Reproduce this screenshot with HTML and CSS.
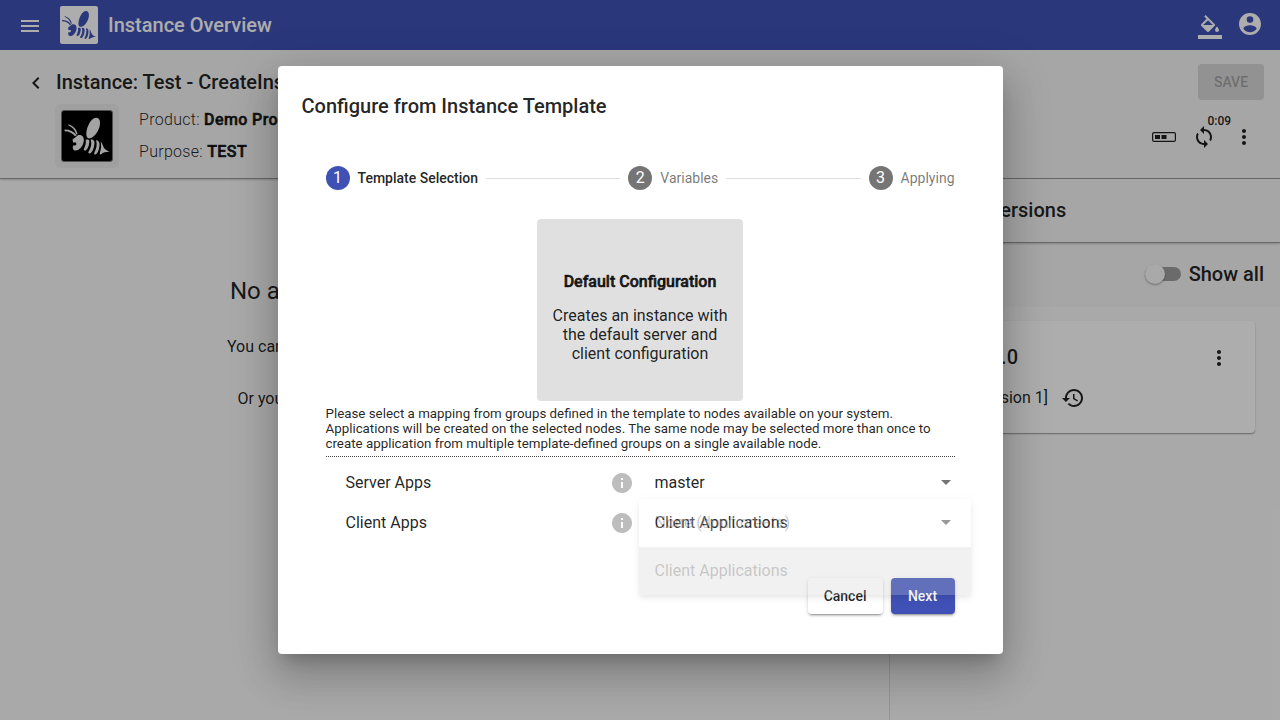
FILE: index.html
```
<!DOCTYPE html>
<html lang="en">
<head>
<meta charset="utf-8">
<title>Instance Overview</title>
<link rel="stylesheet" href="styles.css">
</head>
<body>
<svg class="defs" width="0" height="0">
  <symbol id="bee" viewBox="0 0 154 154">
    <path d="M81 84C71 80 74 55 85 36C95 18 115 14 117 33C119 53 103 80 87 84Q84 85 81 84Z"/>
    <path d="M50 74C62 72 69 81 67 93C65 108 54 121 42 122C34 122 32 114 34 106L41 106Q47 103 43 97L34 97C33 93 33 89 33 86C38 86 41 80 50 74Z"/>
    <path d="M8 57C24 57 37 63 45 75L40 78C33 68 23 62 8 62ZM19 41C35 46 45 57 48 71L44 72C39 58 32 50 20 45Z"/>
    <path d="M73 89C82 86 86 90 84 98C83 108 79 117 74 121Q67 124 67 118C71 108 75 100 73 89Z"/>
    <path d="M88 88C99 87 102 94 99 107C97 119 92 128 86 131Q79 131 82 125C89 114 93 102 88 88Z"/>
    <path d="M105 90C113 90 117 98 115 109C114 121 109 131 103 134Q97 134 100 127C106 115 109 104 105 90Z"/>
    <path d="M119 94C125 99 125 107 129 113C133 119 138 121 146 125C135 127 127 127 120 134Q114 135 117 128C120 117 122 107 119 94Z"/>
  </symbol>
  <symbol id="dots" viewBox="0 0 24 24"><path d="M12 8c1.1 0 2-.9 2-2s-.9-2-2-2-2 .9-2 2 .9 2 2 2zm0 2c-1.1 0-2 .9-2 2s.9 2 2 2 2-.9 2-2-.9-2-2-2zm0 6c-1.1 0-2 .9-2 2s.9 2 2 2 2-.9 2-2-.9-2-2-2z"/></symbol>
  <symbol id="info" viewBox="0 0 24 24"><path d="M12 2C6.48 2 2 6.48 2 12s4.48 10 10 10 10-4.480 10-10S17.520 2 12 2zm1 15h-2v-6h2v6zm0-8h-2V7h2v2z"/></symbol>
</svg>
<div class="app">
  <header class="topbar">
    <svg class="icon icon-menu" viewBox="0 0 24 24"><path d="M3 18h18v-2H3v2zm0-5h18v-2H3v2zm0-7v2h18V6H3z"/></svg>
    <div class="logo"><svg><use href="#bee"/></svg></div>
    <h1 class="topbar-title">Instance Overview</h1>
    <svg class="icon icon-fill" viewBox="0 0 24 24"><path d="M16.560 8.940L7.620 0 6.210 1.410l2.380 2.380-5.150 5.150c-.59.59-.59 1.540 0 2.120l5.500 5.500c.29.29.68.44 1.060.44s.77-.15 1.060-.44l5.500-5.500c.59-.58.59-1.530 0-2.120zM5.210 10L10 5.210 14.790 10H5.210zM19 11.500s-2 2.170-2 3.500c0 1.100.9 2 2 2s2-.9 2-2c0-1.330-2-3.500-2-3.500zM0 20h24v4H0v-4z"/></svg>
    <svg class="icon icon-user" viewBox="0 0 24 24"><path fill-rule="evenodd" d="M12 1C5.900 1 1 5.900 1 12s4.900 11 11 11 11-4.900 11-11S18.100 1 12 1zm0 3.300a3.300 3.300 0 1 1 0 6.600 3.300 3.300 0 0 1 0-6.600zm0 15.900c-2.800 0-5.200-1.400-6.600-3.500 0-2.200 4.400-3.400 6.600-3.400s6.600 1.200 6.600 3.400c-1.400 2.100-3.800 3.500-6.600 3.500z"/></svg>
  </header>
  <section class="instance">
    <div class="instance-row">
      <svg class="icon back" viewBox="0 0 24 24"><path d="M15.410 7.410L14 6l-6 6 6 6 1.410-1.410L10.830 12z"/></svg>
      <h2 class="instance-title">Instance: Test - CreateInstance</h2>
      <div class="save">SAVE</div>
    </div>
    <div class="instance-info">
      <div class="product-frame"><div class="product-logo"><svg><use href="#bee"/></svg></div></div>
      <div class="facts">
        <div>Product: <b>Demo Product</b></div>
        <div>Purpose: <b>TEST</b></div>
      </div>
      <div class="tools">
        <svg class="icon" viewBox="0 0 24 24"><rect x=".6" y="7.600" width="22.800" height="8.800" rx="1.500" fill="none" stroke="currentColor" stroke-width="1.200"/><path d="M3 10h5v4H3zM9.500 10h5v4h-5z"/></svg>
        <div class="sync"><span class="sync-time">0:09</span><svg class="icon" viewBox="0 0 24 24"><path d="M12 4V1L8 5l4 4V6c3.310 0 6 2.690 6 6 0 1.010-.25 1.970-.7 2.800l1.460 1.460C19.540 15.030 20 13.570 20 12c0-4.420-3.580-8-8-8zm0 14c-3.310 0-6-2.690-6-6 0-1.010.25-1.970.7-2.800L5.240 7.740C4.460 8.970 4 10.430 4 12c0 4.420 3.580 8 8 8v3l4-4-4-4v3z"/></svg></div>
        <svg class="icon"><use href="#dots"/></svg>
      </div>
    </div>
  </section>
  <main class="body">
    <div class="empty">
      <h3 class="empty-title">No active version</h3>
      <p class="empty-text">You can select a version</p>
      <p class="empty-text empty-alt">Or you can create one</p>
    </div>
    <aside class="versions">
      <h2 class="versions-title">Instance Versions</h2>
      <div class="show-all"><span class="toggle"><span class="knob"></span></span>Show all</div>
      <div class="version-card">
        <div class="version-row"><span class="version-name">Version 1: 2.0.0</span><svg class="icon card-menu"><use href="#dots"/></svg></div>
        <div class="version-row version-sub"><span class="version-tag">[Version 1]</span><svg class="icon" viewBox="0 0 24 24"><path d="M13 3c-4.970 0-9 4.030-9 9H1l3.890 3.890.07.14L9 12H6c0-3.870 3.130-7 7-7s7 3.130 7 7-3.130 7-7 7c-1.930 0-3.680-.79-4.940-2.060l-1.420 1.420C8.270 19.990 10.510 21 13 21c4.970 0 9-4.030 9-9s-4.030-9-9-9zm-1 5v5l4.280 2.540.72-1.210-3.500-2.080V8H12z"/></svg></div>
      </div>
    </aside>
  </main>
</div>

<div class="backdrop">
  <div class="dialog">
    <h2 class="dialog-title">Configure from Instance Template</h2>
    <div class="stepper">
      <div class="steps">
        <span class="num active">1</span><span class="step active-label">Template Selection</span><i class="line"></i>
        <span class="num">2</span><span class="step">Variables</span><i class="line"></i>
        <span class="num">3</span><span class="step">Applying</span>
      </div>
      <div class="template">
        <b>Default Configuration</b>
        <p>Creates an instance with the default server and client configuration</p>
      </div>
      <p class="hint">Please select a mapping from groups defined in the template to nodes available on your system. Applications will be created on the selected nodes. The same node may be selected more than once to create application from multiple template-defined groups on a single available node.</p>
      <div class="mapping">
        <span>Server Apps</span><svg class="info"><use href="#info"/></svg><div class="select">master<i class="arrow"></i></div>
      </div>
      <div class="mapping">
        <span>Client Apps</span><svg class="info"><use href="#info"/></svg>
        <div class="select">Client Applications<i class="arrow"></i>
          <div class="menu"><div class="option">None (don't create)</div><div class="option selected">Client Applications</div></div>
        </div>
      </div>
      <div class="actions"><div class="btn">Cancel</div><div class="btn primary">Next</div></div>
    </div>
  </div>
</div>
</body>
</html>
```
FILE: styles.css
```
* { box-sizing: border-box; }
body { margin: 0; font-family: Roboto, "Liberation Sans", sans-serif; font-size: 16px; color: rgba(0,0,0,.87); background: #fafafa; overflow: hidden; }
h1, h2, h3, p { margin: 0; font-size: 20px; font-weight: 500; }
b { font-weight: 500; -webkit-text-stroke: .6px currentColor; }
.defs { display: none; }
.icon { width: 24px; height: 24px; fill: currentColor; flex: none; display: block; }
.app { height: 720px; display: flex; flex-direction: column; }

.topbar { height: 50px; flex: none; background: #3f51b5; color: #fff; display: flex; align-items: center; padding: 0 18px; }
.icon-menu { margin-top: 2px; }
.logo { width: 38px; height: 38px; margin-left: 18px; border-radius: 2px; background: #fff; }
.logo svg { width: 38px; height: 38px; fill: #3f51b5; display: block; }
.topbar-title { margin: 0 auto 0 10px; line-height: 32px; }
.icon-fill { margin: 3px 16px 0 0; }
.icon-user { margin: 0 0 2px; }

.instance { height: 129px; flex: none; background: #f5f5f5; border-bottom: 1px solid #999; box-shadow: 0 1px 2px rgba(0,0,0,.2); padding: 14px 16px 0 24px; position: relative; }
.instance-row { display: flex; align-items: center; height: 36px; }
.back { margin-top: 2px; }
.instance-title { margin: 0 auto 0 8px; }
.save { width: 66px; height: 36px; border-radius: 4px; background: rgba(0,0,0,.12); color: rgba(0,0,0,.26); font-size: 14px; font-weight: 500; line-height: 36px; text-align: center; }
.instance-info { display: flex; padding-top: 4px; }
.product-frame { width: 64px; height: 64px; margin-left: 31px; border-radius: 6px; background: #ececec; padding: 6px; }
.product-logo { width: 52px; height: 52px; border-radius: 3px; background: #000; border: 1px solid #777; }
.product-logo svg { width: 50px; height: 50px; fill: #f0f0f0; display: block; }
.facts { margin: 0 auto 0 20px; font-weight: 300; line-height: 32px; letter-spacing: .3px; }
.facts b { letter-spacing: .4px; }
.tools { display: flex; gap: 16px; padding: 21px 8px 0 0; }
.sync { position: relative; }
.sync-time { position: absolute; left: 15.500px; top: -10px; font-size: 12px; line-height: 12px; font-weight: 500; }

.body { flex: 1; display: flex; }
.empty { flex: 1; padding: 96px 0 0 227px; }
.empty-title { font-size: 24px; font-weight: 400; line-height: 32px; padding-left: 3px; }
.empty-text { font-size: 16px; font-weight: 400; line-height: 24px; margin-top: 28px; }
.empty-alt { padding-left: 10.500px; }
.versions { width: 391px; border-left: 1px solid #ddd; }
.versions-title { height: 64px; line-height: 62px; padding-left: 16px; background: #f5f5f5; border-bottom: 1px solid #999; box-shadow: 0 1px 2px rgba(0,0,0,.2); position: relative; }
.show-all { height: 64px; background: #f5f5f5; display: flex; align-items: center; justify-content: flex-end; padding: 0 16px 2px 0; font-size: 20px; font-weight: 500; gap: 7.500px; }
.toggle { width: 36px; height: 14px; border-radius: 7px; background: #9e9e9e; }
.knob { display: block; width: 20px; height: 20px; border-radius: 50%; background: #fafafa; margin-top: -3px; box-shadow: 0 1px 2px rgba(0,0,0,.35); }
.version-card { height: 112px; margin: 14px 25px 0 16px; background: #fff; border-radius: 4px; padding: 20px 24px 0 16px; box-shadow: 0 1px 1px rgba(0,0,0,.3), 0 1px 3px rgba(0,0,0,.12); }
.version-row { display: flex; align-items: center; height: 32px; }
.card-menu { margin-top: 2px; }
.version-name { width: 96px; margin-right: auto; font-size: 20px; font-weight: 500; display: flex; justify-content: flex-end; white-space: nowrap; }
.version-sub { margin-top: 8px; }
.version-sub .icon { margin-top: 1px; }
.version-tag { width: 126px; text-align: right; margin-right: 13px; }

.backdrop { position: absolute; inset: 0; background: rgba(0,0,0,.32); display: flex; justify-content: center; align-items: center; }
.dialog { width: 725px; height: 588px; padding: 24px; border-radius: 4px; background: #fff; box-shadow: 0 11px 15px -7px rgba(0,0,0,.2), 0 24px 38px 3px rgba(0,0,0,.14), 0 9px 46px 8px rgba(0,0,0,.12); }
.dialog-title { line-height: 32px; }
.stepper { padding: 20px 24px 0; }
.steps { height: 72px; display: flex; align-items: center; font-size: 14px; color: rgba(0,0,0,.54); }
.num { width: 24px; height: 24px; border-radius: 50%; background: #757575; color: #fff; font-size: 16px; line-height: 24px; text-align: center; margin-right: 8px; }
.num.active { background: #3f51b5; }
.active-label { color: rgba(0,0,0,.87); font-weight: 500; }
.line { flex: 1; height: 1px; background: #e0e0e0; margin: 0 8px; }
.template { width: 206px; height: 182px; margin: 5px auto 0; border-radius: 4px; background: #e0e0e0; text-align: center; padding: 53px 10px 0; line-height: 19px; }
.template p { font-size: 16px; font-weight: 400; margin-top: 15px; }
.hint { font-size: 13.333px; font-weight: 400; line-height: 15px; padding: 5px 0; border-bottom: 1px dotted #444; margin-bottom: 6px; }
.mapping { height: 40px; display: grid; grid-template-columns: 264px 45px 1fr; padding-left: 20px; align-items: center; line-height: 24px; }
.mapping span, .select { margin-top: -1px; }
.info { width: 24px; height: 24px; fill: #bdbdbd; }
.select { position: relative; display: flex; align-items: center; justify-content: space-between; padding-right: 4px; }
.arrow { border: 5px solid transparent; border-top-color: #757575; border-bottom: 0; }
.menu { position: absolute; left: -16px; top: -12px; width: 332px; opacity: .25; background: #fff; border-radius: 4px; overflow: hidden; box-shadow: 0 2px 4px -1px rgba(0,0,0,.2), 0 4px 5px rgba(0,0,0,.14), 0 1px 10px rgba(0,0,0,.12); z-index: 2; }
.option { height: 48px; line-height: 48px; padding: 0 16px; }
.selected { background: #cacaca; }
.actions { display: flex; justify-content: flex-end; gap: 8px; padding-top: 35px; }
.btn { height: 36px; min-width: 64px; text-align: center; line-height: 36px; padding: 0 16px; border-radius: 4px; font-size: 14px; font-weight: 500; box-shadow: 0 3px 1px -2px rgba(0,0,0,.2), 0 2px 2px rgba(0,0,0,.14), 0 1px 5px rgba(0,0,0,.12); background: #fff; }
.primary { background: #3f51b5; color: #fff; }
```
